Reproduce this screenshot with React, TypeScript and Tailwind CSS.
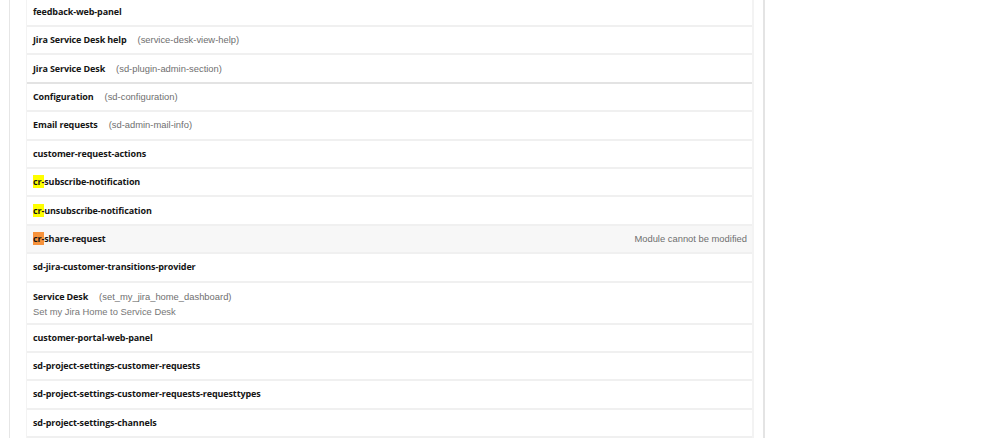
import React from "react";

type Row = {
  name: string;
  key?: string;
  hl?: "yellow" | "orange";
  note?: string;
  desc?: string;
  muted?: boolean;
  strong?: boolean;
};

const rows: Row[] = [
  { name: "feedback-web-panel" },
  { name: "Jira Service Desk help", key: "(service-desk-view-help)" },
  { name: "Jira Service Desk", key: "(sd-plugin-admin-section)", strong: true },
  { name: "Configuration", key: "(sd-configuration)" },
  { name: "Email requests", key: "(sd-admin-mail-info)" },
  { name: "customer-request-actions" },
  { name: "subscribe-notification", hl: "yellow" },
  { name: "unsubscribe-notification", hl: "yellow" },
  { name: "share-request", hl: "orange", note: "Module cannot be modified", muted: true },
  { name: "sd-jira-customer-transitions-provider" },
  {
    name: "Service Desk",
    key: "(set_my_jira_home_dashboard)",
    desc: "Set my Jira Home to Service Desk",
  },
  { name: "customer-portal-web-panel" },
  { name: "sd-project-settings-customer-requests" },
  { name: "sd-project-settings-customer-requests-requesttypes" },
  { name: "sd-project-settings-channels" },
];

const bold = { fontFamily: "'Open Sans', 'Noto Sans', sans-serif" };

function ModuleRow({ row }: { row: Row }) {
  const border = row.strong ? "border-[#e3e3e3]" : "border-[#f0f0f0]";
  const bg = row.muted ? "bg-[#f7f7f7]" : "bg-white";
  return (
    <div
      className={`flex justify-between border-b-2 ${border} ${bg} pl-[6px] pr-[5px] ${
        row.desc ? "h-[42px] items-start pt-[8px]" : "h-[28.4px] items-center"
      }`}
    >
      <div className="flex flex-col gap-[3px]">
        <div className="flex items-center">
          <span
            className="text-[9px] font-bold tracking-[-0.12px] text-[#151515] leading-[12px]"
            style={bold}
          >
            {row.hl && (
              <span
                className={row.hl === "yellow" ? "bg-[#ffff00]" : "bg-[#f7923b]"}
              >
                cr-
              </span>
            )}
            {row.name}
          </span>
          {row.key && (
            <span className="ml-[11px] font-['Liberation_Sans',Arial,sans-serif] text-[9.4px] text-[#6f6f6f] leading-[12px]">
              {row.key}
            </span>
          )}
        </div>
        {row.desc && (
          <span className="font-['Liberation_Sans',Arial,sans-serif] text-[9.4px] text-[#777] leading-[12px]">
            {row.desc}
          </span>
        )}
      </div>
      {row.note && (
        <span className="font-['Liberation_Sans',Arial,sans-serif] text-[9.4px] text-[#6f6f6f] leading-[12px]">
          {row.note}
        </span>
      )}
    </div>
  );
}

export default function App() {
  return (
    <div className="flex h-[438px] w-[998px] overflow-hidden bg-white">
      <div className="w-[10px] shrink-0 border-r border-[#e6e6e6]" />
      <div className="ml-[16px] w-[728px] shrink-0 border-l border-r-2 border-[#f3f3f3] -mt-[1.4px]">
        {rows.map((r, i) => (
          <ModuleRow key={i} row={r} />
        ))}
      </div>
      <div className="ml-[9px] w-[2px] shrink-0 bg-[#e4e4e4]" />
      <div className="flex-1" />
    </div>
  );
}
